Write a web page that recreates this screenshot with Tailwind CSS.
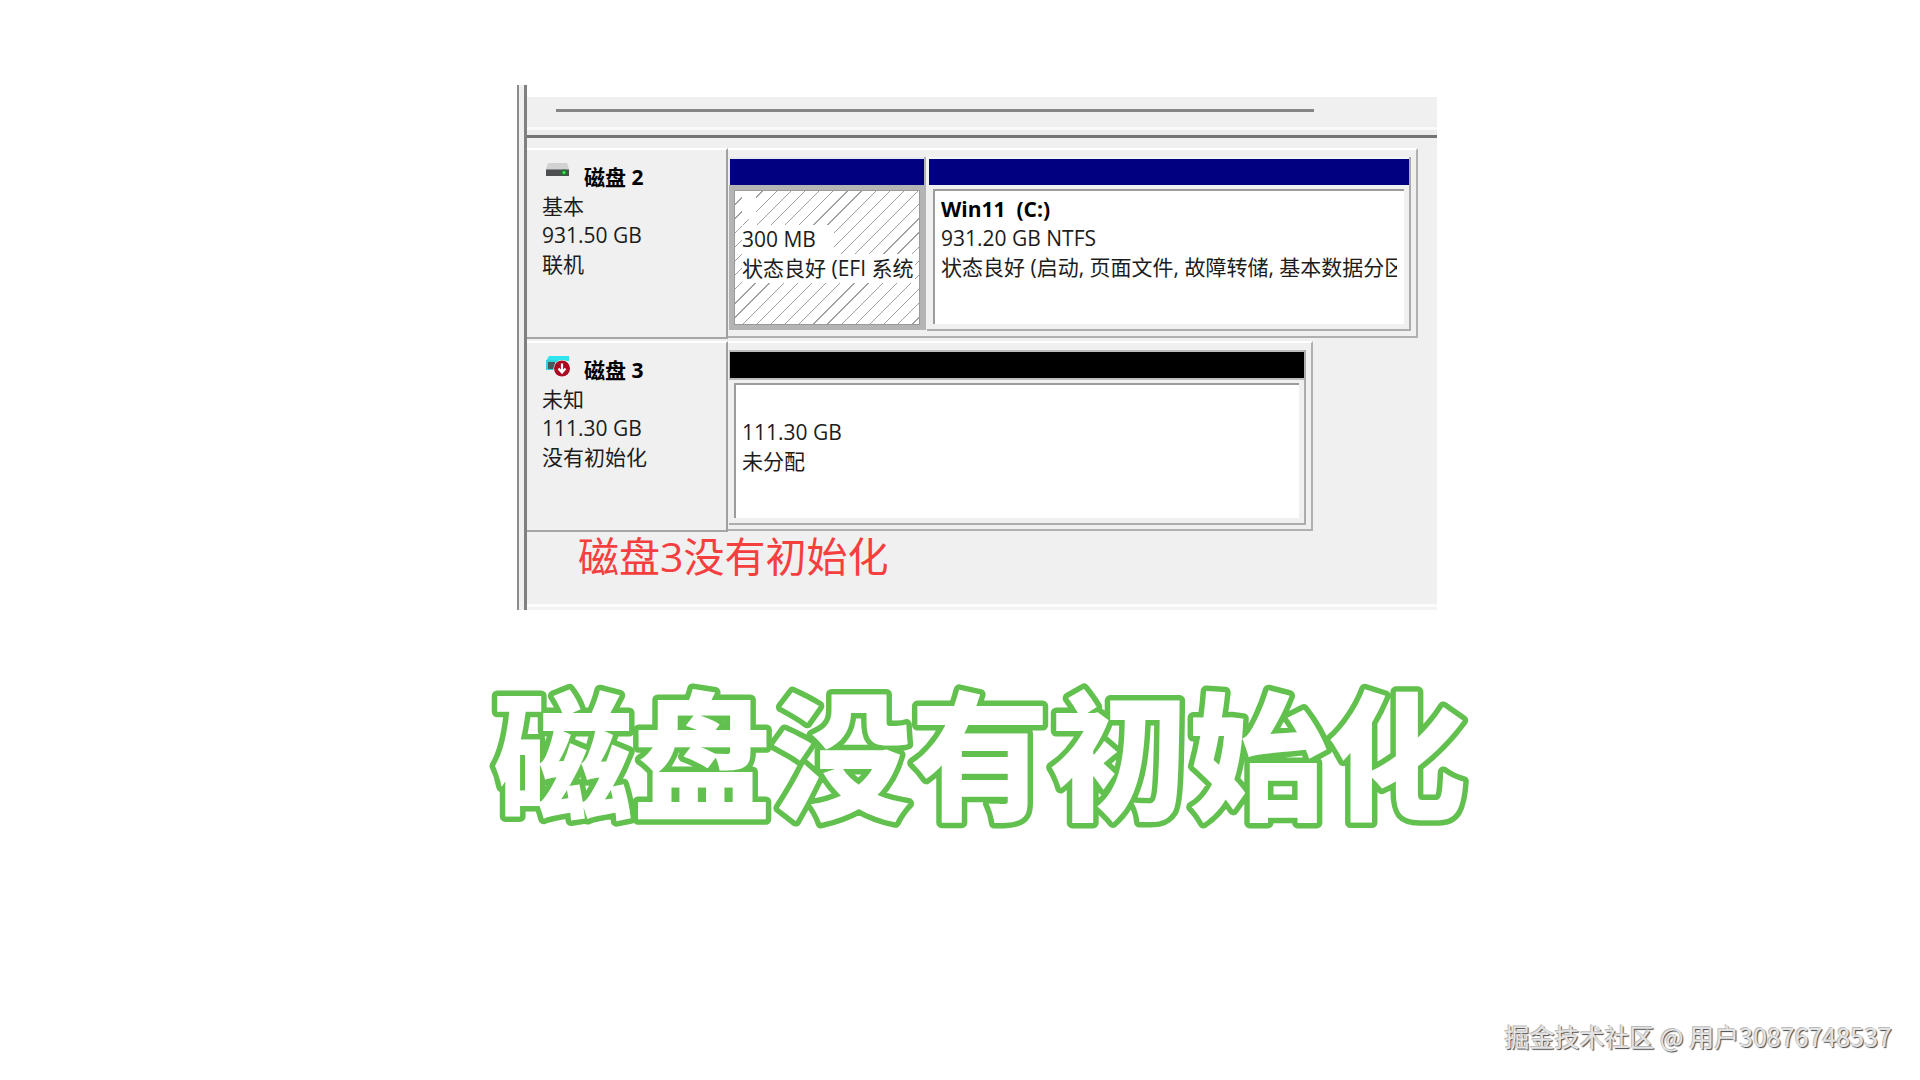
<!DOCTYPE html>
<html lang="zh-CN">
<head>
  <meta charset="UTF-8">
  <meta name="viewport" content="width=device-width, initial-scale=1.0">
  <title>磁盘没有初始化</title>
  <script src="https://cdn.jsdelivr.net/npm/@tailwindcss/browser@4"></script>
</head>
<body class="flex flex-col min-h-screen bg-white text-[#1c1c1c] font-['Open_Sans','Noto_Sans_CJK_SC',sans-serif]">

  <main class="flex flex-col items-center pt-[85px] pl-[34px]">

    <!-- Disk management pane -->
    <section class="flex w-full max-w-[920px] text-[21px] leading-[29px]">
      <div class="w-[7px] shrink-0 border-l-2 border-[#8c8c8c] bg-[#f0f0f0]"></div>

      <div class="flex-1 min-w-0 border-l-3 border-[#808080]">
        <!-- scrollbar -->
        <div class="mt-3 h-[30px] bg-[#f0f0f0] pt-3 pl-[29px]">
          <div class="h-[3px] w-[86%] bg-[#868686]"></div>
        </div>
        <div class="h-[3px] bg-[#fafafa]"></div>
        <div class="h-[5px] bg-[#ececec]"></div>
        <div class="h-[3px] bg-[#737373]"></div>

        <div class="bg-[#f0f0f0] pt-[10px]">
          <!-- Disk 2 -->
          <div class="flex items-start">
            <div class="w-[201px] shrink-0 h-[191px] border-t-2 border-t-white border-b-2 border-b-[#a6a6a6] border-r-2 border-r-[#a0a0a0] pt-[13px] pl-[15px]">
              <h2 class="flex font-bold text-black">
                <svg class="w-6 h-6 mr-[14px] ml-1" viewBox="0 0 24 24">
                  <path d="M2 0h19l2 6H0z" fill="#d2d2d2"/>
                  <path d="M0 6h23v7H0z" fill="#4d4f50"/>
                  <path d="M0 6h23v1H0z" fill="#8b8d8e"/>
                  <circle cx="18" cy="9.500" r="3" fill="#187c29"/>
                  <circle cx="18" cy="9.500" r="1.500" fill="#4be35c"/>
                </svg>
                磁盘 2
              </h2>
              <p>基本</p>
              <p>931.50 GB</p>
              <p>联机</p>
            </div>

            <div class="flex-1 min-w-0 mr-[19px] h-[190px] border-t-2 border-t-white border-r-2 border-r-[#b0b0b0] border-b-2 border-b-[#b0b0b0] pt-[7px] pl-px pr-[5px] flex items-start">
              <div class="w-[197px] shrink-0 border-r-2 border-[#b4b4b4] h-[173px]">
                <div class="h-[28px] border-t-2 border-l border-[#e8e8f0] bg-[#000080]"></div>
                <div class="-mr-px h-[145px] border-[6px] border-[#b4b4b4] bg-[repeating-linear-gradient(135deg,#fff_0px,#fff_9px,#a0a0a0_9px,#a0a0a0_10px)] outline-1 -outline-offset-6 outline-[#9a9a9a] overflow-hidden pl-[7px] whitespace-nowrap">
                  <p><span class="inline-block w-[14px] h-7 bg-white align-top"></span></p>
                  <p class="mt-[5px] w-[92px] bg-white">300 MB</p>
                  <p class="bg-white mr-1 overflow-hidden">状态良好 (EFI 系统</p>
                </div>
              </div>

              <div class="flex-1 min-w-0 ml-px h-[174px] border-r-2 border-b-2 border-[#acacac]">
                <div class="h-[28px] border-t-2 border-l-2 border-[#f6f6f6] bg-[#000080]"></div>
                <div class="ml-[6px] mr-[5px] mt-[4px] h-[135px] border-t-2 border-l-2 border-[#9c9c9c] bg-white pt-[4px] pl-[6px] pr-[7px] whitespace-nowrap">
                  <h3 class="font-bold text-black whitespace-pre">Win11  (C:)</h3>
                  <p>931.20 GB NTFS</p>
                  <p class="overflow-hidden">状态良好 (启动, 页面文件, 故障转储, 基本数据分区)</p>
                </div>
              </div>
            </div>
          </div>

          <!-- Disk 3 -->
          <div class="flex items-start pt-[2px]">
            <div class="w-[201px] shrink-0 h-[191px] border-t-2 border-t-white border-b-2 border-b-[#a6a6a6] border-r-2 border-r-[#a0a0a0] pt-[13px] pl-[15px]">
              <h2 class="flex font-bold text-black">
                <svg class="w-6 h-6 mr-[14px] ml-1" viewBox="0 0 24 24">
                  <path d="M3 0h20v5H0z" fill="#30e4ee"/>
                  <path d="M0 4h12v10H0z" fill="#2fd4df"/>
                  <path d="M2 6h7v7H2z" fill="#4a5a5c"/>
                  <circle cx="16" cy="12.500" r="8.500" fill="#fff"/>
                  <circle cx="16" cy="12.500" r="8" fill="#a80c22"/>
                  <path d="M16 7.500v8M12.500 12.500l3.500 4 3.500-4" fill="none" stroke="#fff" stroke-width="2.200"/>
                </svg>
                磁盘 3
              </h2>
              <p>未知</p>
              <p>111.30 GB</p>
              <p>没有初始化</p>
            </div>

            <div class="flex-1 min-w-0 mr-[124px] h-[190px] border-t-2 border-t-white border-r-2 border-r-[#b0b0b0] border-b-2 border-b-[#b0b0b0] pt-[7px] pl-px pr-[5px]">
              <div class="h-[175px] border-r-2 border-b-2 border-[#acacac]">
                <div class="h-[30px] border-t-2 border-l border-b-2 border-[#bdbdbd] bg-black"></div>
                <div class="ml-[5px] mr-[5px] mt-[3px] h-[135px] border-t-2 border-l-2 border-[#9c9c9c] bg-white pt-[33px] pl-[6px]">
                  <p>111.30 GB</p>
                  <p>未分配</p>
                </div>
              </div>
            </div>
          </div>

          <p class="pl-[51px] h-[72px] text-[41px] leading-[48px] text-[#f53f3f]">磁盘3没有初始化</p>
          <div class="h-[3px] bg-[#fcfcfc]"></div>
          <div class="h-[3px] bg-[#f3f3f3]"></div>
        </div>
      </div>
    </section>

    <!-- Outlined title -->
    <h1 class="mt-[56px] font-black font-['Noto_Sans_CJK_SC',sans-serif]">
      <svg class="w-[1000px] max-w-full" viewBox="0 0 1000 220">
        <text x="503" y="143" text-anchor="middle" font-size="139" fill="#fff" stroke="#62c14e" stroke-width="11" stroke-linejoin="round" paint-order="stroke">磁盘没有初始化</text>
      </svg>
    </h1>
  </main>

  <footer class="mt-auto pr-7 pb-[26px] text-right text-[25px] leading-9 text-[#e4e4e4] font-['Noto_Sans_CJK_SC',sans-serif] [text-shadow:-1px_-1px_0_#bbb,1px_1px_1px_#444]">
    掘金技术社区 @ 用户30876748537
  </footer>
</body>
</html>
